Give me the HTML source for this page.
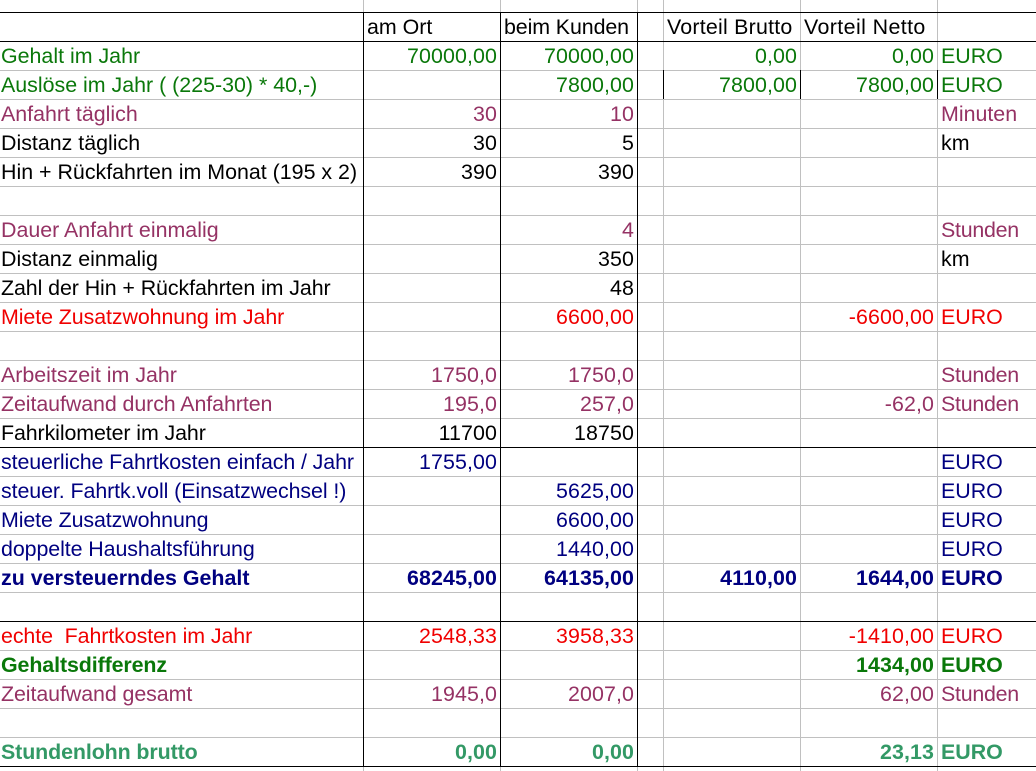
<!DOCTYPE html>
<html><head><meta charset="utf-8"><style>
html,body{margin:0;padding:0;background:#fff}
#s{position:relative;width:1036px;height:771px;overflow:hidden;background:#fff;font:21.4px/29px "Liberation Sans",Arial,sans-serif;color:#000}
.h,.v{position:absolute;background:#c0c0c0}
.h{left:0;width:1036px;height:1px}
.v{top:0;width:1px;height:771px}
.k{background:#000}
.r{position:absolute;left:0;width:1036px;height:29px;white-space:pre}
.r span{position:absolute;top:0}
.a{left:1px}
.b{right:539px;letter-spacing:.1px}
.c{right:402px;letter-spacing:.1px}
.d{right:239px;letter-spacing:.1px}
.e{right:102px;letter-spacing:.1px}
.f{left:941px}
.l2{left:367px}.l3{left:504px;letter-spacing:-.1px}.l4{left:667px;letter-spacing:.22px}.l5{left:804px;letter-spacing:.4px}
.m{letter-spacing:-.08px}.q{letter-spacing:-.1px}.u{letter-spacing:-.25px}
.g{color:#0a780a}.p{color:#953264}.n{color:#000080}.x{color:#f00000}.t{color:#339966}.bo{font-weight:bold}
</style></head><body><div id="s">
<div class="v" style="left:363px"></div><div class="v" style="left:500px"></div><div class="v" style="left:637px"></div><div class="v" style="left:663px"></div><div class="v" style="left:800px"></div><div class="v" style="left:937px"></div>
<div class="h" style="top:70px"></div><div class="h" style="top:99px"></div><div class="h" style="top:128px"></div><div class="h" style="top:157px"></div><div class="h" style="top:186px"></div><div class="h" style="top:215px"></div><div class="h" style="top:244px"></div><div class="h" style="top:273px"></div><div class="h" style="top:302px"></div><div class="h" style="top:331px"></div><div class="h" style="top:360px"></div><div class="h" style="top:389px"></div><div class="h" style="top:418px"></div><div class="h" style="top:476px"></div><div class="h" style="top:505px"></div><div class="h" style="top:534px"></div><div class="h" style="top:563px"></div><div class="h" style="top:592px"></div><div class="h" style="top:650px"></div><div class="h" style="top:679px"></div><div class="h" style="top:708px"></div><div class="h" style="top:737px"></div>
<div class="v k" style="left:363px;top:12px;height:755px"></div><div class="v k" style="left:500px;top:12px;height:755px"></div><div class="v k" style="left:637px;top:12px;height:755px"></div>
<div class="v k" style="left:663px;top:70px;height:29px"></div><div class="v k" style="left:800px;top:70px;height:29px"></div><div class="v k" style="left:937px;top:70px;height:29px"></div>
<div class="h k" style="top:12px"></div><div class="h k" style="top:41px"></div><div class="h k" style="top:447px"></div><div class="h k" style="top:621px"></div><div class="h k" style="top:766px"></div>

<div class="r" style="top:13px"><span class="l2">am Ort</span><span class="l3">beim Kunden</span><span class="l4">Vorteil Brutto</span><span class="l5">Vorteil Netto</span></div>
<div class="r g" style="top:42px"><span class="a">Gehalt im Jahr</span><span class="b">70000,00</span><span class="c">70000,00</span><span class="d">0,00</span><span class="e">0,00</span><span class="f">EURO</span></div>
<div class="r g" style="top:71px"><span class="a">Auslöse im Jahr ( (225-30) * 40,-)</span><span class="c">7800,00</span><span class="d">7800,00</span><span class="e">7800,00</span><span class="f">EURO</span></div>
<div class="r p" style="top:100px"><span class="a">Anfahrt täglich</span><span class="b">30</span><span class="c">10</span><span class="f">Minuten</span></div>
<div class="r" style="top:129px"><span class="a">Distanz täglich</span><span class="b">30</span><span class="c">5</span><span class="f">km</span></div>
<div class="r" style="top:158px"><span class="a">Hin + Rückfahrten im Monat (195 x 2)</span><span class="b">390</span><span class="c">390</span></div>
<div class="r p" style="top:216px"><span class="a">Dauer Anfahrt einmalig</span><span class="c">4</span><span class="f u">Stunden</span></div>
<div class="r" style="top:245px"><span class="a">Distanz einmalig</span><span class="c">350</span><span class="f">km</span></div>
<div class="r" style="top:274px"><span class="a m">Zahl der Hin + Rückfahrten im Jahr</span><span class="c">48</span></div>
<div class="r x" style="top:303px"><span class="a m">Miete Zusatzwohnung im Jahr</span><span class="c">6600,00</span><span class="e">-6600,00</span><span class="f">EURO</span></div>
<div class="r p" style="top:361px"><span class="a">Arbeitszeit im Jahr</span><span class="b">1750,0</span><span class="c">1750,0</span><span class="f u">Stunden</span></div>
<div class="r p" style="top:390px"><span class="a m">Zeitaufwand durch Anfahrten</span><span class="b">195,0</span><span class="c">257,0</span><span class="e">-62,0</span><span class="f u">Stunden</span></div>
<div class="r" style="top:419px"><span class="a q">Fahrkilometer im Jahr</span><span class="b">11700</span><span class="c">18750</span></div>
<div class="r n" style="top:448px"><span class="a q">steuerliche Fahrtkosten einfach / Jahr</span><span class="b">1755,00</span><span class="f">EURO</span></div>
<div class="r n" style="top:477px"><span class="a m">steuer. Fahrtk.voll (Einsatzwechsel !)</span><span class="c">5625,00</span><span class="f">EURO</span></div>
<div class="r n" style="top:506px"><span class="a q">Miete Zusatzwohnung</span><span class="c">6600,00</span><span class="f">EURO</span></div>
<div class="r n" style="top:535px"><span class="a m">doppelte Haushaltsführung</span><span class="c">1440,00</span><span class="f">EURO</span></div>
<div class="r n bo" style="top:564px"><span class="a">zu versteuerndes Gehalt</span><span class="b">68245,00</span><span class="c">64135,00</span><span class="d">4110,00</span><span class="e">1644,00</span><span class="f">EURO</span></div>
<div class="r x" style="top:622px"><span class="a m">echte  Fahrtkosten im Jahr</span><span class="b">2548,33</span><span class="c">3958,33</span><span class="e">-1410,00</span><span class="f">EURO</span></div>
<div class="r g bo" style="top:651px"><span class="a q">Gehaltsdifferenz</span><span class="e">1434,00</span><span class="f">EURO</span></div>
<div class="r p" style="top:680px"><span class="a m">Zeitaufwand gesamt</span><span class="b">1945,0</span><span class="c">2007,0</span><span class="e">62,00</span><span class="f u">Stunden</span></div>
<div class="r t bo" style="top:738px"><span class="a q">Stundenlohn brutto</span><span class="b">0,00</span><span class="c">0,00</span><span class="e">23,13</span><span class="f">EURO</span></div>
</div></body></html>
